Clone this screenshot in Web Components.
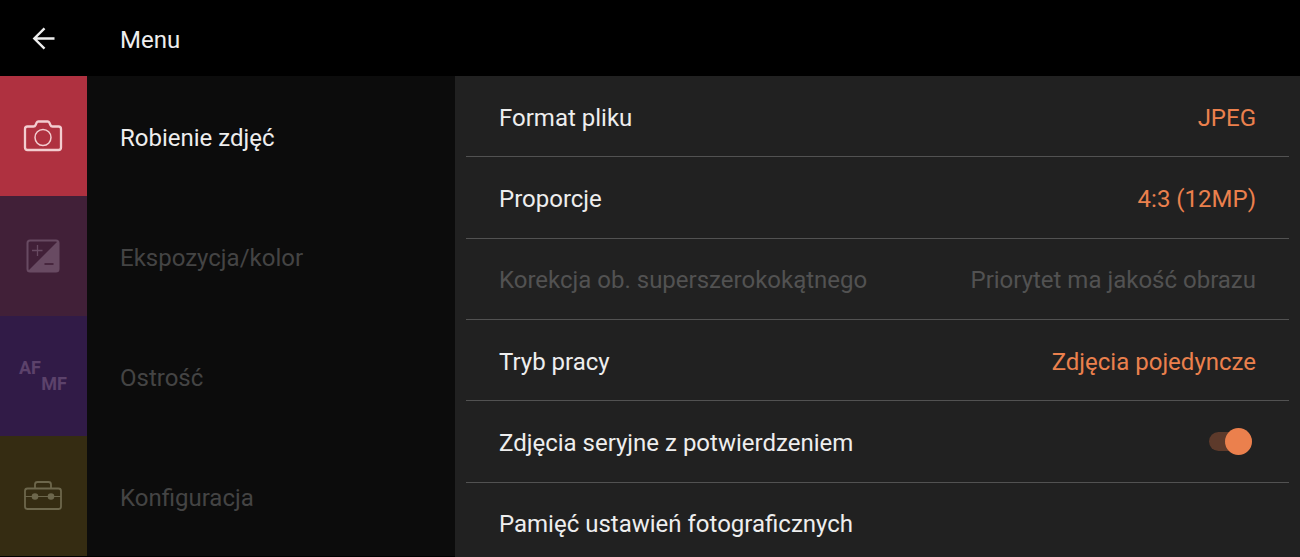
<!DOCTYPE html>
<html lang="pl">
<head>
<meta charset="utf-8">
<meta name="viewport" content="width=device-width, initial-scale=1">
<title>Menu</title>
<style>
  html, body {
    height: 100%;
    margin: 0;
  }

  body {
    background-color: #000;
    color: #eee;
    font-family: Roboto, "Noto Sans", sans-serif;
    font-size: 24px;
    line-height: 28px;
    overflow: hidden;
  }
</style>
</head>
<body>
<camera-menu>
  <menu-header slot="header">Menu</menu-header>

  <category-item slot="categories" icon="camera" color="#af3140" active>Robienie zdjęć</category-item>
  <category-item slot="categories" icon="exposure" color="#412038">Ekspozycja/kolor</category-item>
  <category-item slot="categories" icon="focus" color="#311b47">Ostrość</category-item>
  <category-item slot="categories" icon="toolbox" color="#352c12">Konfiguracja</category-item>

  <setting-row value="JPEG">Format pliku</setting-row>
  <setting-row value="4:3 (12MP)">Proporcje</setting-row>
  <setting-row value="Priorytet ma jakość obrazu" disabled>Korekcja ob. superszerokokątnego</setting-row>
  <setting-row value="Zdjęcia pojedyncze">Tryb pracy</setting-row>
  <setting-toggle checked>Zdjęcia seryjne z potwierdzeniem</setting-toggle>
  <setting-row>Pamięć ustawień fotograficznych</setting-row>
</camera-menu>

<script>
const ICONS = {
  camera: `
    <svg width="40" height="40" viewBox="0 0 40 40" fill="none" stroke="#f3cdd0" aria-hidden="true">
      <path stroke-width="2.300" stroke-linejoin="round" d="M4.500 10.500H10.500Q12 10.500 12.600 9L13.700 6.500Q14.200 5.500 15.300 5.500H24.700Q25.800 5.500 26.300 6.500L27.400 9Q28 10.500 29.500 10.500H35.500Q38 10.500 38 13V31.500Q38 34 35.500 34H4.500Q2 34 2 31.500V13Q2 10.500 4.500 10.500Z"/>
      <circle cx="20" cy="21.500" r="8" stroke-width="1.500"/>
    </svg>`,
  exposure: `
    <svg width="40" height="40" viewBox="0 0 40 40" fill="none" stroke="#684a62" aria-hidden="true">
      <rect x="4.500" y="4.500" width="31" height="31" rx="2.500" stroke-width="2"/>
      <path fill="#684a62" stroke="none" d="M35 5V35H5Z"/>
      <path stroke-width="1.300" d="M9 14.500H19.500M14.500 9V20"/>
      <path stroke="#412038" stroke-width="1.700" d="M21.500 28H30.500"/>
    </svg>`,
  focus: `<span class="focus" aria-hidden="true"><span>AF</span><span>MF</span></span>`,
  toolbox: `
    <svg width="40" height="40" viewBox="0 0 40 40" fill="none" stroke="#6d674c" aria-hidden="true">
      <rect x="2" y="12.500" width="36" height="20.500" rx="2.500" stroke-width="1.800"/>
      <path stroke-width="1.800" d="M12 12.500V8.500Q12 6 14.500 6H25.500Q28 6 28 8.500V12.500"/>
      <path stroke-width="1" d="M2 20.500H38"/>
      <circle cx="12" cy="20.500" r="3.300" fill="#6d674c" stroke="none"/>
      <circle cx="28" cy="20.500" r="3.300" fill="#6d674c" stroke="none"/>
    </svg>`,
};

class CameraMenu extends HTMLElement {
  constructor() {
    super();
    this.attachShadow({ mode: "open" }).innerHTML = `
      <style>
        :host {
          display: flex;
          flex-direction: column;
          height: 100vh;
        }

        .columns {
          display: grid;
          flex: 1;
          grid-template-columns: 35% 1fr;
          min-height: 0;
        }

        nav {
          background-color: #0c0c0c;
          border-bottom: 1px solid #000;
          overflow: hidden;
        }

        /* the last row runs past the bottom edge */
        main {
          background-color: #212121;
          display: flex;
          flex-direction: column;
          margin-bottom: -7px;
          padding: 0 11px;
        }
      </style>
      <slot name="header"></slot>
      <div class="columns">
        <nav><slot name="categories"></slot></nav>
        <main><slot></slot></main>
      </div>
    `;
  }
}

class MenuHeader extends HTMLElement {
  constructor() {
    super();
    this.attachShadow({ mode: "open" }).innerHTML = `
      <style>
        :host {
          display: block;
        }

        header {
          align-items: center;
          display: flex;
          gap: 33px;
          height: 76px;
        }

        button {
          background: none;
          border: none;
          display: grid;
          height: 76px;
          padding: 0;
          place-items: center;
          width: 87px;
        }

        h1 {
          font: inherit;
          margin: 0;
          padding-top: 3px;
        }
      </style>
      <header>
        <button type="button" aria-label="Wstecz">
          <svg width="24" height="24" viewBox="0 0 24 24" fill="none" stroke="#eee" stroke-width="2.400">
            <path d="M22.500 12.500H3M12.500 2.300L2.300 12.500L12.500 22.700"/>
          </svg>
        </button>
        <h1><slot></slot></h1>
      </header>
    `;
  }
}

class CategoryItem extends HTMLElement {
  constructor() {
    super();
    this.attachShadow({ mode: "open" });
  }

  connectedCallback() {
    const active = this.hasAttribute("active");
    this.shadowRoot.innerHTML = `
      <style>
        :host {
          display: block;
        }

        button {
          align-items: center;
          background: none;
          border: none;
          color: #444;
          display: flex;
          font: inherit;
          gap: 33px;
          height: 120px;
          padding: 0;
          text-align: left;
          width: 100%;
        }

        button[aria-current="true"] {
          color: #eee;
        }

        .tile {
          align-self: stretch;
          background-color: ${this.getAttribute("color")};
          box-sizing: border-box;
          display: grid;
          flex: none;
          padding-right: 1px;
          place-items: center;
          width: 87px;
        }

        .label {
          padding-top: 3px;
        }

        .focus {
          color: #5c426b;
          display: flex;
          flex-direction: column;
          font: bold 18px/16px Roboto, sans-serif;
          width: 48px;
        }

        .focus span {
          align-self: flex-start;
        }

        .focus span:last-child {
          align-self: flex-end;
        }
      </style>
      <button type="button" aria-current="${active}">
        <span class="tile">${ICONS[this.getAttribute("icon")]}</span>
        <span class="label"><slot></slot></span>
      </button>
    `;
  }
}

// shared by every entry of the settings list
const ROW_STYLE = `
  :host {
    border-bottom: 1px solid #525252;
    display: flex;
    flex: 1;
  }

  .row {
    align-items: center;
    background: none;
    border: none;
    color: inherit;
    display: flex;
    flex: 1;
    font: inherit;
    justify-content: space-between;
    padding: 0 33px;
    text-align: left;
  }

  .row span {
    padding-top: 3px;
  }
`;

class SettingRow extends HTMLElement {
  constructor() {
    super();
    this.attachShadow({ mode: "open" });
  }

  connectedCallback() {
    const value = this.getAttribute("value");
    this.shadowRoot.innerHTML = `
      <style>
        ${ROW_STYLE}

        .value {
          color: #eb804d;
        }

        .row:disabled,
        .row:disabled .value {
          color: #525252;
        }
      </style>
      <button class="row" type="button" ${this.hasAttribute("disabled") ? "disabled" : ""}>
        <span><slot></slot></span>
        ${value ? `<span class="value">${value}</span>` : ""}
      </button>
    `;
  }
}

class SettingToggle extends HTMLElement {
  constructor() {
    super();
    this.attachShadow({ mode: "open" });
  }

  connectedCallback() {
    this.shadowRoot.innerHTML = `
      <style>
        ${ROW_STYLE}

        input {
          align-items: center;
          appearance: none;
          background-color: #5d3a2b;
          border-radius: 10px;
          display: flex;
          height: 19px;
          margin: 0 4px 0 0;
          width: 43px;
        }

        input::before {
          background-color: #888;
          border-radius: 50%;
          content: "";
          height: 27px;
          width: 27px;
        }

        input:checked {
          justify-content: flex-end;
        }

        input:checked::before {
          background-color: #eb804d;
        }
      </style>
      <label class="row">
        <span><slot></slot></span>
        <input type="checkbox" role="switch" ${this.hasAttribute("checked") ? "checked" : ""}>
      </label>
    `;
  }
}

customElements.define("camera-menu", CameraMenu);
customElements.define("menu-header", MenuHeader);
customElements.define("category-item", CategoryItem);
customElements.define("setting-row", SettingRow);
customElements.define("setting-toggle", SettingToggle);
</script>
</body>
</html>
